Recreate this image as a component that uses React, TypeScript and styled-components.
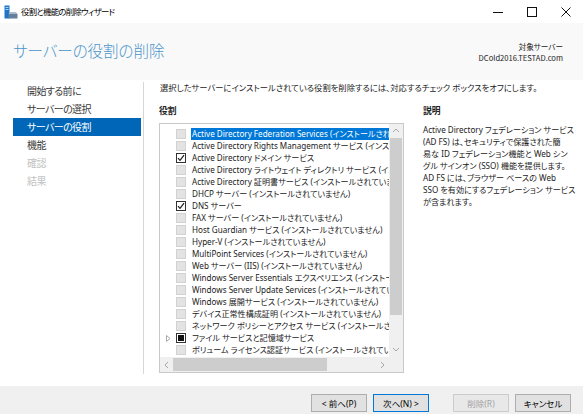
import React from 'react';
import styled, { createGlobalStyle } from 'styled-components';

const Global = createGlobalStyle`
  html, body { margin: 0; padding: 0; background: #fff; }
  body {
    font-family: "Noto Sans", "Noto Sans CJK JP", sans-serif;
    font-feature-settings: "palt";
  }
  * { box-sizing: border-box; }
`;

const Window = styled.div`
  width: 583px;
  height: 414px;
  display: flex;
  flex-direction: column;
  background: #fff;
  overflow: hidden;
  color: #1e1e1e;
`;

const TitleBar = styled.div`
  height: 23px;
  flex-shrink: 0;
  display: flex;
  align-items: center;
  padding-left: 4px;
  background: #fff;
`;

const TitleText = styled.span`
  font-family: "Noto Sans CJK JP", sans-serif;
  font-size: 8.4px;
  letter-spacing: -0.7px;
  margin-left: 3px;
  color: #000;
  line-height: 1;
`;

const Controls = styled.div`
  margin-left: auto;
  display: flex;
  height: 100%;
`;

const ControlBtn = styled.div`
  width: 34px;
  height: 100%;
  display: flex;
  align-items: center;
  justify-content: center;
`;

const Header = styled.div`
  height: 57px;
  flex-shrink: 0;
  background: #f9f9f9;
  display: flex;
  justify-content: space-between;
  padding: 0 20px 0 13px;
`;

const PageTitle = styled.h1`
  margin: 17px 0 0 0;
  font-family: "Noto Sans CJK JP", sans-serif;
  font-size: 15.5px;
  line-height: 20px;
  font-weight: 300;
  color: #4b95c9;
`;

const ServerInfo = styled.div`
  margin-top: 18px;
  text-align: right;
  font-family: "Noto Sans CJK JP", sans-serif;
  font-size: 7.6px;
  line-height: 11px;
  color: #222;
`;

const Main = styled.div`
  flex: 1;
  display: flex;
  padding: 2px 0 12px 0;
  min-height: 0;
`;

const Nav = styled.nav`
  width: 144px;
  flex-shrink: 0;
  border-right: 1px solid #d6d6d6;
  display: flex;
  flex-direction: column;
`;

const NavItem = styled.div<{ $active?: boolean; $disabled?: boolean }>`
  height: 18px;
  margin: 0 2px 0 13px;
  padding-left: 14px;
  font-family: "Noto Sans CJK JP", sans-serif;
  font-size: 10px;
  letter-spacing: -0.6px;
  line-height: 18px;
  white-space: nowrap;
  background: ${p => (p.$active ? '#0067b8' : 'transparent')};
  color: ${p => (p.$active ? '#fff' : p.$disabled ? '#c2c2c2' : '#3a3a3a')};
`;

const Content = styled.div`
  flex: 1;
  padding-left: 15px;
  display: flex;
  flex-direction: column;
`;

const Instruction = styled.div`
  font-size: 8.3px;
  line-height: 12px;
  white-space: nowrap;
  color: #222;
  padding-left: 1px;
`;

const Columns = styled.div`
  display: flex;
  gap: 19px;
  margin-top: 11px;
`;

const LeftCol = styled.div`
  width: 245px;
  display: flex;
  flex-direction: column;
`;

const RightCol = styled.div`
  width: 155px;
  display: flex;
  flex-direction: column;
`;

const SectionLabel = styled.div`
  font-size: 8.8px;
  line-height: 12px;
  font-weight: 700;
  color: #222;
`;

const ListBox = styled.div`
  margin-top: 6px;
  height: 250px;
  border: 1px solid #c9c9c9;
  display: grid;
  grid-template-columns: 1fr 14px;
  grid-template-rows: 1fr 15px;
  background: #fff;
`;

const Rows = styled.div`
  overflow: hidden;
  padding-top: 4px;
`;

const Row = styled.div`
  height: 12px;
  display: flex;
  align-items: center;
  padding-left: 4px;
  white-space: nowrap;
`;

const Expander = styled.div`
  width: 8px;
  height: 12px;
  display: flex;
  align-items: center;
  justify-content: center;
  flex-shrink: 0;
`;

const Box = styled.div<{ $state: 'off' | 'on' | 'partial' }>`
  width: 10px;
  height: 10px;
  margin-left: 4px;
  flex-shrink: 0;
  display: flex;
  align-items: center;
  justify-content: center;
  background: ${p => (p.$state === 'off' ? '#e3e3e3' : '#fff')};
  border: 1px solid ${p => (p.$state === 'off' ? '#d2d2d2' : '#333')};
`;

const Inner = styled.div`
  width: 6px;
  height: 6px;
  background: #111;
`;

const Label = styled.span<{ $selected?: boolean }>`
  margin-left: 5px;
  font-size: 8.1px;
  line-height: 12px;
  padding: 0 1px;
  color: ${p => (p.$selected ? '#fff' : '#222')};
  background: ${p => (p.$selected ? '#0078d7' : 'transparent')};
`;

const VScroll = styled.div`
  background: #f0f0f0;
  display: flex;
  flex-direction: column;
`;

const HScroll = styled.div`
  background: #f0f0f0;
  display: flex;
`;

const Corner = styled.div`
  background: #f0f0f0;
`;

const Arrow = styled.div<{ $v?: boolean }>`
  width: ${p => (p.$v ? '14px' : '13px')};
  height: ${p => (p.$v ? '14px' : '15px')};
  flex-shrink: 0;
  display: flex;
  align-items: center;
  justify-content: center;
`;

const VThumb = styled.div`
  height: 177px;
  margin: 0 1px;
  background: #cdcdcd;
`;

const HThumb = styled.div`
  width: 154px;
  margin: 1px 0;
  background: #cdcdcd;
`;

const Spacer = styled.div`
  flex: 1;
`;

const DescLabel = styled(SectionLabel)``;

const DescText = styled.div`
  margin-top: 7px;
  font-size: 8.1px;
  line-height: 12px;
  color: #222;
  white-space: nowrap;
`;

const DescLine = styled.div``;

const Footer = styled.div`
  height: 28px;
  flex-shrink: 0;
  background: #f0f0f0;
  display: flex;
  justify-content: flex-end;
  padding: 8px 12px 0 0;
  gap: 6px;
`;

const Button = styled.div<{ $primary?: boolean; $disabled?: boolean; $gapBefore?: boolean }>`
  width: 56px;
  height: 18px;
  display: flex;
  align-items: center;
  justify-content: center;
  font-size: 8.5px;
  margin-left: ${p => (p.$gapBefore ? '18px' : '0')};
  background: ${p => (p.$disabled ? '#e8e8e8' : '#e1e1e1')};
  border: 1px solid ${p => (p.$primary ? '#0078d7' : p.$disabled ? '#cccccc' : '#adadad')};
  color: ${p => (p.$disabled ? '#a3a3a3' : '#000')};
`;

type Item = { text: string; state: 'off' | 'on' | 'partial'; expand?: boolean; selected?: boolean };

const items: Item[] = [
  { text: 'Active Directory Federation Services (インストールされていません)', state: 'off', selected: true },
  { text: 'Active Directory Rights Management サービス (インストールされていません)', state: 'off' },
  { text: 'Active Directory ドメイン サービス', state: 'on' },
  { text: 'Active Directory ライトウェイト ディレクトリ サービス (インストールされていません)', state: 'off' },
  { text: 'Active Directory 証明書サービス (インストールされていません)', state: 'off' },
  { text: 'DHCP サーバー (インストールされていません)', state: 'off' },
  { text: 'DNS サーバー', state: 'on' },
  { text: 'FAX サーバー (インストールされていません)', state: 'off' },
  { text: 'Host Guardian サービス (インストールされていません)', state: 'off' },
  { text: 'Hyper-V (インストールされていません)', state: 'off' },
  { text: 'MultiPoint Services (インストールされていません)', state: 'off' },
  { text: 'Web サーバー (IIS) (インストールされていません)', state: 'off' },
  { text: 'Windows Server Essentials エクスペリエンス (インストールされていません)', state: 'off' },
  { text: 'Windows Server Update Services (インストールされていません)', state: 'off' },
  { text: 'Windows 展開サービス (インストールされていません)', state: 'off' },
  { text: 'デバイス正常性構成証明 (インストールされていません)', state: 'off' },
  { text: 'ネットワーク ポリシーとアクセス サービス (インストールされていません)', state: 'off' },
  { text: 'ファイル サービスと記憶域サービス', state: 'partial', expand: true },
  { text: 'ボリューム ライセンス認証サービス (インストールされていません)', state: 'off' },
];

const desc = [
  'Active Directory フェデレーション サービス',
  '(AD FS) は、セキュリティで保護された簡',
  '易な ID フェデレーション機能と Web シン',
  'グル サインオン (SSO) 機能を提供します。',
  'AD FS には、ブラウザー ベースの Web',
  'SSO を有効にするフェデレーション サービス',
  'が含まれます。',
];

const AppIcon = () => (
  <svg width="14" height="14" viewBox="0 0 14 14">
    <rect x="0.5" y="0.5" width="5" height="13" fill="#1f74c9" />
    <rect x="1.5" y="2" width="3" height="1" fill="#a8d0f4" />
    <rect x="1.5" y="4" width="3" height="1" fill="#a8d0f4" />
    <path d="M6 7 L12 7 L13.5 9 L4.5 9 Z" fill="#a9bccf" />
    <rect x="4.5" y="9" width="9" height="4.5" fill="#637f9c" />
  </svg>
);

const Check = () => (
  <svg width="8" height="8" viewBox="0 0 8 8">
    <polyline points="1,4.2 3,6.4 7,1.2" fill="none" stroke="#1a1a1a" strokeWidth="1.2" />
  </svg>
);

const Chevron = ({ dir }: { dir: 'up' | 'down' | 'left' | 'right' }) => {
  const d = {
    up: 'M1 5 L4 2 L7 5',
    down: 'M1 2 L4 5 L7 2',
    left: 'M5 1 L2 4 L5 7',
    right: 'M2 1 L5 4 L2 7',
  }[dir];
  return (
    <svg width="8" height="8" viewBox="0 0 8 8">
      <path d={d} fill="none" stroke="#a6a6a6" strokeWidth="1" />
    </svg>
  );
};

export default function App() {
  return (
    <>
      <Global />
      <Window>
        <TitleBar>
          <AppIcon />
          <TitleText>役割と機能の削除ウィザード</TitleText>
          <Controls>
            <ControlBtn>
              <svg width="10" height="10" viewBox="0 0 10 10">
                <line x1="0" y1="5.5" x2="10" y2="5.5" stroke="#111" strokeWidth="1" />
              </svg>
            </ControlBtn>
            <ControlBtn>
              <svg width="10" height="10" viewBox="0 0 10 10">
                <rect x="0.5" y="0.5" width="9" height="9" fill="none" stroke="#111" strokeWidth="1" />
              </svg>
            </ControlBtn>
            <ControlBtn>
              <svg width="10" height="10" viewBox="0 0 10 10">
                <path d="M0.5 0.5 L9.5 9.5 M9.5 0.5 L0.5 9.5" stroke="#111" strokeWidth="1" />
              </svg>
            </ControlBtn>
          </Controls>
        </TitleBar>
        <Header>
          <PageTitle>サーバーの役割の削除</PageTitle>
          <ServerInfo>
            <div>対象サーバー</div>
            <div>DCold2016.TESTAD.com</div>
          </ServerInfo>
        </Header>
        <Main>
          <Nav>
            <NavItem>開始する前に</NavItem>
            <NavItem>サーバーの選択</NavItem>
            <NavItem $active>サーバーの役割</NavItem>
            <NavItem>機能</NavItem>
            <NavItem $disabled>確認</NavItem>
            <NavItem $disabled>結果</NavItem>
          </Nav>
          <Content>
            <Instruction>
              選択したサーバーにインストールされている役割を削除するには、対応するチェック ボックスをオフにします。
            </Instruction>
            <Columns>
              <LeftCol>
                <SectionLabel>役割</SectionLabel>
                <ListBox>
                  <Rows>
                    {items.map((it, i) => (
                      <Row key={i}>
                        <Expander>
                          {it.expand && (
                            <svg width="5" height="7" viewBox="0 0 5 7">
                              <path d="M0.5 0.5 L4 3.5 L0.5 6.5 Z" fill="none" stroke="#a8a8a8" strokeWidth="1" />
                            </svg>
                          )}
                        </Expander>
                        <Box $state={it.state}>
                          {it.state === 'on' && <Check />}
                          {it.state === 'partial' && <Inner />}
                        </Box>
                        <Label $selected={it.selected}>{it.text}</Label>
                      </Row>
                    ))}
                  </Rows>
                  <VScroll>
                    <Arrow $v>
                      <Chevron dir="up" />
                    </Arrow>
                    <VThumb />
                    <Spacer />
                    <Arrow $v>
                      <Chevron dir="down" />
                    </Arrow>
                  </VScroll>
                  <HScroll>
                    <Arrow>
                      <Chevron dir="left" />
                    </Arrow>
                    <HThumb />
                    <Spacer />
                    <Arrow>
                      <Chevron dir="right" />
                    </Arrow>
                  </HScroll>
                  <Corner />
                </ListBox>
              </LeftCol>
              <RightCol>
                <DescLabel>説明</DescLabel>
                <DescText>
                  {desc.map((l, i) => (
                    <DescLine key={i}>{l}</DescLine>
                  ))}
                </DescText>
              </RightCol>
            </Columns>
          </Content>
        </Main>
        <Footer>
          <Button>&lt; 前へ(P)</Button>
          <Button $primary>次へ(N) &gt;</Button>
          <Button $disabled $gapBefore>削除(R)</Button>
          <Button>キャンセル</Button>
        </Footer>
      </Window>
    </>
  );
}
